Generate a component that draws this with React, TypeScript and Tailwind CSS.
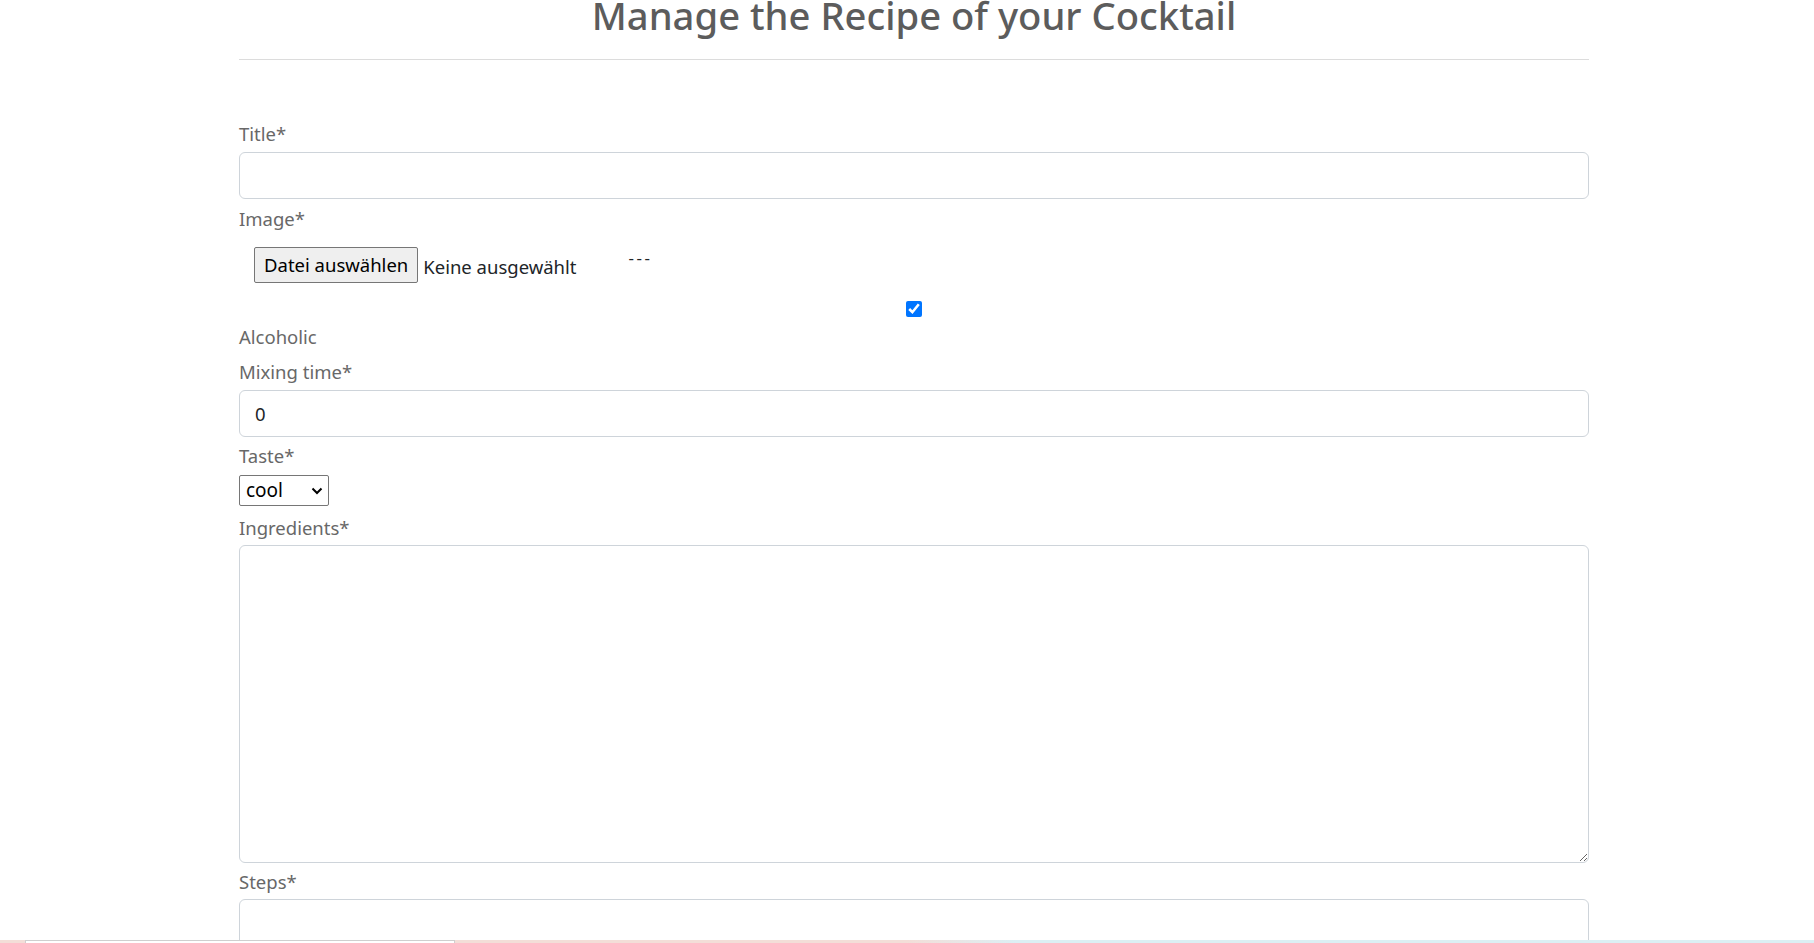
import React from 'react';

function Label({ children }: { children: React.ReactNode }) {
  return <div className="h-[30px] text-[18.5px] leading-[30px] text-[#686868]">{children}</div>;
}

export default function App() {
  return <div className="relative min-h-[943px] w-full overflow-hidden bg-white font-['Noto_Sans',sans-serif]">
      <div className="ml-[239px] w-[1350px]">
        <h1 className="-mt-[7px] text-center text-[38.2px] font-medium leading-[1.2] text-[#5c5c5c]">
          Manage the Recipe of your Cocktail
        </h1>
        <hr className="mt-[20px] border-t border-[#dcdcdc]" />

        <form className="mt-[59px] flex flex-col">
          <Label>Title*</Label>
          <input type="text" className="mt-[3px] h-[47px] w-full rounded-[6px] border border-[#ced4da] px-[15px] text-[18.5px] text-[#212529] outline-none" />

          <div className="mt-[5px]">
            <Label>Image*</Label>
          </div>
          <div className="mt-[13px] flex h-[36px] items-center pl-[15px]">
            <span className="flex h-[36px] items-center rounded-[2px] border border-[#767676] bg-[#efefef] px-[9px] text-[18.5px] text-black">
              Datei auswählen
            </span>
            <span className="ml-[5px] pt-[4px] text-[18.5px] text-[#212529]">Keine ausgewählt</span>
            <span className="ml-[52px] -mt-[14px] text-[17px] tracking-[2.5px] text-[#212529]">---</span>
          </div>

          <div className="mt-[18px] flex h-[16px] justify-center">
            <input type="checkbox" defaultChecked className="h-[16px] w-[16px] accent-[#0075ff]" />
          </div>

          <div className="mt-[5px]">
            <Label>Alcoholic</Label>
          </div>
          <div className="mt-[5px]">
            <Label>Mixing time*</Label>
          </div>
          <input type="number" defaultValue={0} className="mt-[3px] h-[47px] w-full rounded-[6px] border border-[#ced4da] px-[15px] text-[18.5px] text-[#212529] outline-none [appearance:textfield]" />

          <div className="mt-[4px]">
            <Label>Taste*</Label>
          </div>
          <div className="relative mt-[4px] h-[31px] w-[90px]">
            <select defaultValue="cool" className="h-[31px] w-[90px] appearance-none rounded-[2px] border border-[#767676] bg-white pl-[6px] text-[19px] leading-[29px] text-black outline-none">
              <option value="cool">cool</option>
              <option value="sweet">sweet</option>
              <option value="sour">sour</option>
            </select>
            <svg className="pointer-events-none absolute right-[6px] top-[12px]" width="12" height="8" viewBox="0 0 12 8" fill="none">
              <path d="M1.5 1.5L6 6L10.5 1.5" stroke="#000" strokeWidth="2" />
            </svg>
          </div>

          <div className="mt-[7px]">
            <Label>Ingredients*</Label>
          </div>
          <textarea className="mt-[2px] h-[318px] w-full rounded-[6px] border border-[#ced4da] px-[15px] py-[8px] text-[18.5px] text-[#212529] outline-none" />

          <div className="mt-[4px]">
            <Label>Steps*</Label>
          </div>
          <textarea className="mt-[2px] h-[120px] w-full rounded-[6px] border border-[#ced4da] px-[15px] py-[8px] text-[18.5px] text-[#212529] outline-none" />
        </form>
      </div>

      <div className="fixed bottom-0 left-0 flex h-[3px] w-full bg-[linear-gradient(to_right,#f3ded8_0%,#f3ded8_50%,#dceff4_56%,#dceff4_100%)]">
        <div className="ml-[25px] h-[3px] w-[430px] border-x border-t border-[#cfcfcf] bg-white" />
      </div>
    </div>;
}
